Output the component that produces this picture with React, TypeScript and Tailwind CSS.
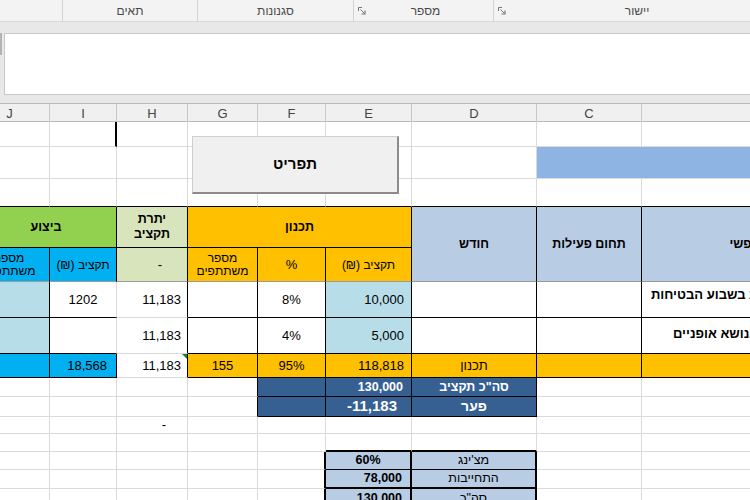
import React from "react";

type CellProps = { c?: string; children?: React.ReactNode; dir?: "rtl" | "ltr" };

function C({ c = "", children, dir }: CellProps) {
  return (
    <div
      dir={dir}
      className={
        "relative flex items-center overflow-hidden whitespace-nowrap border-r border-b border-[#dadada] " + c
      }
    >
      {children}
    </div>
  );
}

function Launcher() {
  return (
    <svg width="8" height="8" viewBox="0 0 8 8" className="shrink-0">
      <path d="M0.5 4V0.5H4" stroke="#777" fill="none" strokeWidth="1" />
      <path d="M2.5 2.5L6.5 6.5" stroke="#777" strokeWidth="1" />
      <path d="M3.5 7H7V3.5" stroke="#777" fill="none" strokeWidth="1.2" />
    </svg>
  );
}

const COLS = "grid grid-cols-[80px_67px_71px_70px_68px_86px_125px_105px_246px] ml-[-30px]";

export default function App() {
  return (
    <div className="w-[750px] h-[500px] overflow-hidden bg-white font-['Liberation_Sans',Arial,'DejaVu_Sans',sans-serif] text-[13px] text-black">
      {/* ribbon group labels */}
      <div className="flex h-[22px] border-b border-[#d8d8d8] bg-[#f3f3f3] text-[12px] text-[#4a4a4a]">
        <div className="w-[63px] shrink-0 border-r border-[#d3d3d3]" />
        <div className="flex w-[135px] shrink-0 items-center justify-center border-r border-[#d3d3d3]" dir="rtl">
          תאים
        </div>
        <div className="flex w-[156px] shrink-0 items-center justify-center border-r border-[#d3d3d3]" dir="rtl">
          סגנונות
        </div>
        <div className="flex w-[140px] shrink-0 items-center border-r border-[#d3d3d3] pl-[4px]">
          <Launcher />
          <span className="flex-1 pr-[8px] text-center" dir="rtl">
            מספר
          </span>
        </div>
        <div className="flex flex-1 items-center pl-[4px]">
          <Launcher />
          <span className="flex-1 pl-[18px] text-center" dir="rtl">
            יישור
          </span>
        </div>
      </div>

      {/* formula bar */}
      <div className="flex items-start bg-[#e8e8e8] pt-[11px] pb-[8px]">
        <div className="h-[22px] w-[2px] bg-[#b4b4b4]" />
        <div className="ml-[2px] h-[62px] flex-1 border border-r-0 border-[#c8c8c8] bg-white" />
      </div>

      {/* column headers */}
      <div className="h-[19px] border-t border-b border-[#b9b9b9] bg-[#f0f0f0] text-[13px] text-[#444]">
        <div className={COLS + " h-full"}>
          {["J", "I", "H", "G", "F", "E", "D", "C", "B"].map((l) => (
            <div key={l} className="flex items-center justify-center border-r border-[#c8c8c8]">
              {l}
            </div>
          ))}
        </div>
      </div>

      {/* sheet */}
      <div className="relative">
        <div
          className={
            COLS +
            " grid-rows-[25px_32px_28px_41px_34px_36px_36px_24px_19px_20px_17px_18px_18px_19px_19px_19px]"
          }
        >
          {/* row 1 */}
          <C />
          <C c="border-r-2 border-r-black" />
          <C />
          <C />
          <C />
          <C />
          <C />
          <C />
          <C />

          {/* row 2 */}
          <C />
          <C />
          <C />
          <C />
          <C />
          <C />
          <C />
          <C c="col-span-2 border-r-0 bg-[#8db4e2]" />

          {/* row 3 */}
          <C c="border-b-black" />
          <C c="border-b-black" />
          <C c="border-b-black" />
          <C c="border-b-black" />
          <C c="border-b-black" />
          <C c="border-b-black" />
          <C c="border-b-black" />
          <C c="border-b-black" />
          <C c="border-b-black" />

          {/* row 4 */}
          <C c="col-span-2 justify-center bg-[#92d050] font-bold text-[12.5px] border-r-black border-b-black" dir="rtl">
            <span className="pl-[6px]">ביצוע</span>
          </C>
          <C c="justify-center bg-[#d8e4bc] text-center font-bold text-[12.5px] leading-[15px] border-r-black border-b-black" dir="rtl">
            <div>
              יתרת
              <br />
              תקציב
            </div>
          </C>
          <C c="col-span-3 justify-center bg-[#ffc000] font-bold text-[12.5px] border-r-black border-b-black" dir="rtl">
            תכנון
          </C>
          <C c="row-span-2 justify-center bg-[#b8cce4] font-bold text-[12.5px] border-r-black border-b-[#9a9a9a]" dir="rtl">
            חודש
          </C>
          <C c="row-span-2 justify-center bg-[#b8cce4] font-bold text-[12.5px] border-r-black border-b-[#9a9a9a]" dir="rtl">
            תחום פעילות
          </C>
          <C c="row-span-2 justify-center bg-[#b8cce4] font-bold text-[12.5px] border-b-[#9a9a9a]" dir="rtl">
            תיאור חופשי
          </C>

          {/* row 5 */}
          <C c="justify-center bg-[#00b0f0] text-center text-[12px] leading-[13px] border-r-black border-b-[#9a9a9a]" dir="rtl">
            <div>
              מספר
              <br />
              משתתפים
            </div>
          </C>
          <C c="justify-center bg-[#00b0f0] text-[12px] border-r-black border-b-[#9a9a9a]" dir="rtl">
            תקציב (₪)
          </C>
          <C c="justify-end bg-[#d8e4bc] pr-[25px] border-r-black border-b-[#9a9a9a]">-</C>
          <C c="justify-center bg-[#ffc000] text-center text-[12px] leading-[13px] border-r-black border-b-[#9a9a9a]" dir="rtl">
            <div>
              מספר
              <br />
              משתתפים
            </div>
          </C>
          <C c="justify-center bg-[#ffc000] text-[13px] border-r-black border-b-[#9a9a9a]">%</C>
          <C c="justify-center bg-[#ffc000] text-[12px] border-r-black border-b-[#9a9a9a]" dir="rtl">
            תקציב (₪)
          </C>

          {/* row 6 */}
          <C c="bg-[#b7dee8] border-r-black border-b-black" />
          <C c="justify-center border-b-black">1202</C>
          <C c="justify-end pr-[6px] border-r-black">11,183</C>
          <C c="border-r-black border-b-black" />
          <C c="justify-center border-r-black border-b-black">8%</C>
          <C c="justify-end bg-[#b7dee8] pr-[7px] border-r-black border-b-black">10,000</C>
          <C c="border-r-black border-b-black" />
          <C c="border-r-black border-b-black" />
          <C c="items-start pt-[3px] pl-[9px] font-bold text-[13px] border-b-black">
            <span dir="rtl">רכב בשבוע הבטיחות</span>
          </C>

          {/* row 7 */}
          <C c="bg-[#b7dee8] border-r-black border-b-black" />
          <C c="border-b-black" />
          <C c="justify-end pr-[6px] border-r-black">11,183</C>
          <C c="border-r-black border-b-black" />
          <C c="justify-center border-r-black border-b-black">4%</C>
          <C c="justify-end bg-[#b7dee8] pr-[7px] border-r-black border-b-black">5,000</C>
          <C c="border-r-black border-b-black" />
          <C c="border-r-black border-b-black" />
          <C c="items-start pt-[6px] pl-[31px] font-bold text-[13px] border-b-black">
            <span dir="rtl">פעילות בנושא אופניים</span>
          </C>

          {/* row 8 */}
          <C c="bg-[#00b0f0] border-r-black border-b-black" />
          <C c="justify-end bg-[#00b0f0] pr-[9px] border-r-black border-b-black">18,568</C>
          <C c="justify-end pr-[6px] border-r-black">
            11,183
            <span className="absolute top-0 right-0 h-0 w-0 border-t-[5px] border-l-[5px] border-t-[#1e7a34] border-l-transparent" />
          </C>
          <C c="justify-center bg-[#ffc000] border-r-black border-b-black">155</C>
          <C c="justify-center bg-[#ffc000] border-r-black border-b-black">95%</C>
          <C c="justify-end bg-[#ffc000] pr-[7px] border-r-black border-b-black">118,818</C>
          <C c="justify-center bg-[#ffc000] border-r-black border-b-black" dir="rtl">
            תכנון
          </C>
          <C c="bg-[#ffc000] border-r-black border-b-black" />
          <C c="bg-[#ffc000] border-b-black" />

          {/* row 9 */}
          <C />
          <C />
          <C />
          <C c="border-r-black" />
          <C c="bg-[#366092] border-r-black border-b-black" />
          <C c="justify-end bg-[#366092] pr-[8px] font-bold text-[12.5px] text-white border-r-black border-b-black">
            130,000
          </C>
          <C c="justify-center bg-[#366092] font-bold text-[12.5px] text-white border-r-black border-b-black" dir="rtl">
            סה"כ תקציב
          </C>
          <C />
          <C />

          {/* row 10 */}
          <C />
          <C />
          <C />
          <C c="border-r-black" />
          <C c="bg-[#366092] border-r-black border-b-black" />
          <C c="justify-end bg-[#366092] pr-[14px] font-bold text-[15px] text-white border-r-black border-b-black">
            -11,183
          </C>
          <C c="justify-center bg-[#366092] font-bold text-[14px] text-white border-r-black border-b-black" dir="rtl">
            פער
          </C>
          <C />
          <C />

          {/* row 11 */}
          <C />
          <C />
          <C c="justify-end pr-[21px]">-</C>
          <C />
          <C />
          <C />
          <C />
          <C />
          <C />

          {/* row 12 */}
          <C />
          <C />
          <C />
          <C />
          <C />
          <C c="border-b-2 border-b-black" />
          <C c="border-b-2 border-b-black" />
          <C />
          <C />

          {/* row 13 */}
          <C />
          <C />
          <C />
          <C />
          <C c="border-r-2 border-r-black" />
          <C c="justify-center bg-[#b8cce4] font-bold text-[12.5px] border-r-2 border-r-black border-b-black">60%</C>
          <C c="justify-center bg-[#b8cce4] text-[12.5px] border-r-2 border-r-black border-b-black" dir="rtl">
            מצ'ינג
          </C>
          <C />
          <C />

          {/* row 14 */}
          <C />
          <C />
          <C />
          <C />
          <C c="border-r-2 border-r-black" />
          <C c="justify-end bg-[#b8cce4] pr-[8px] font-bold text-[12.5px] border-r-2 border-r-black border-b-2 border-b-black">
            78,000
          </C>
          <C c="justify-center bg-[#b8cce4] text-[12.5px] border-r-2 border-r-black border-b-2 border-b-black" dir="rtl">
            התחייבות
          </C>
          <C />
          <C />

          {/* row 15 */}
          <C />
          <C />
          <C />
          <C />
          <C c="border-r-2 border-r-black" />
          <C c="justify-end bg-[#b8cce4] pr-[8px] font-bold text-[12.5px] border-r-2 border-r-black border-b-black">
            130,000
          </C>
          <C c="justify-center bg-[#b8cce4] text-[12.5px] border-r-2 border-r-black border-b-black" dir="rtl">
            סה"כ
          </C>
          <C />
          <C />
        </div>

        {/* floating form button */}
        <button
          type="button"
          dir="rtl"
          className="absolute left-[192px] top-[14px] flex h-[58px] w-[207px] items-center justify-center border border-[#cfcfcf] border-r-2 border-b-2 border-r-[#8c8c8c] border-b-[#8c8c8c] bg-[#f0f0f0] text-[15px] font-bold text-black"
        >
          תפריט
        </button>
      </div>
    </div>
  );
}
